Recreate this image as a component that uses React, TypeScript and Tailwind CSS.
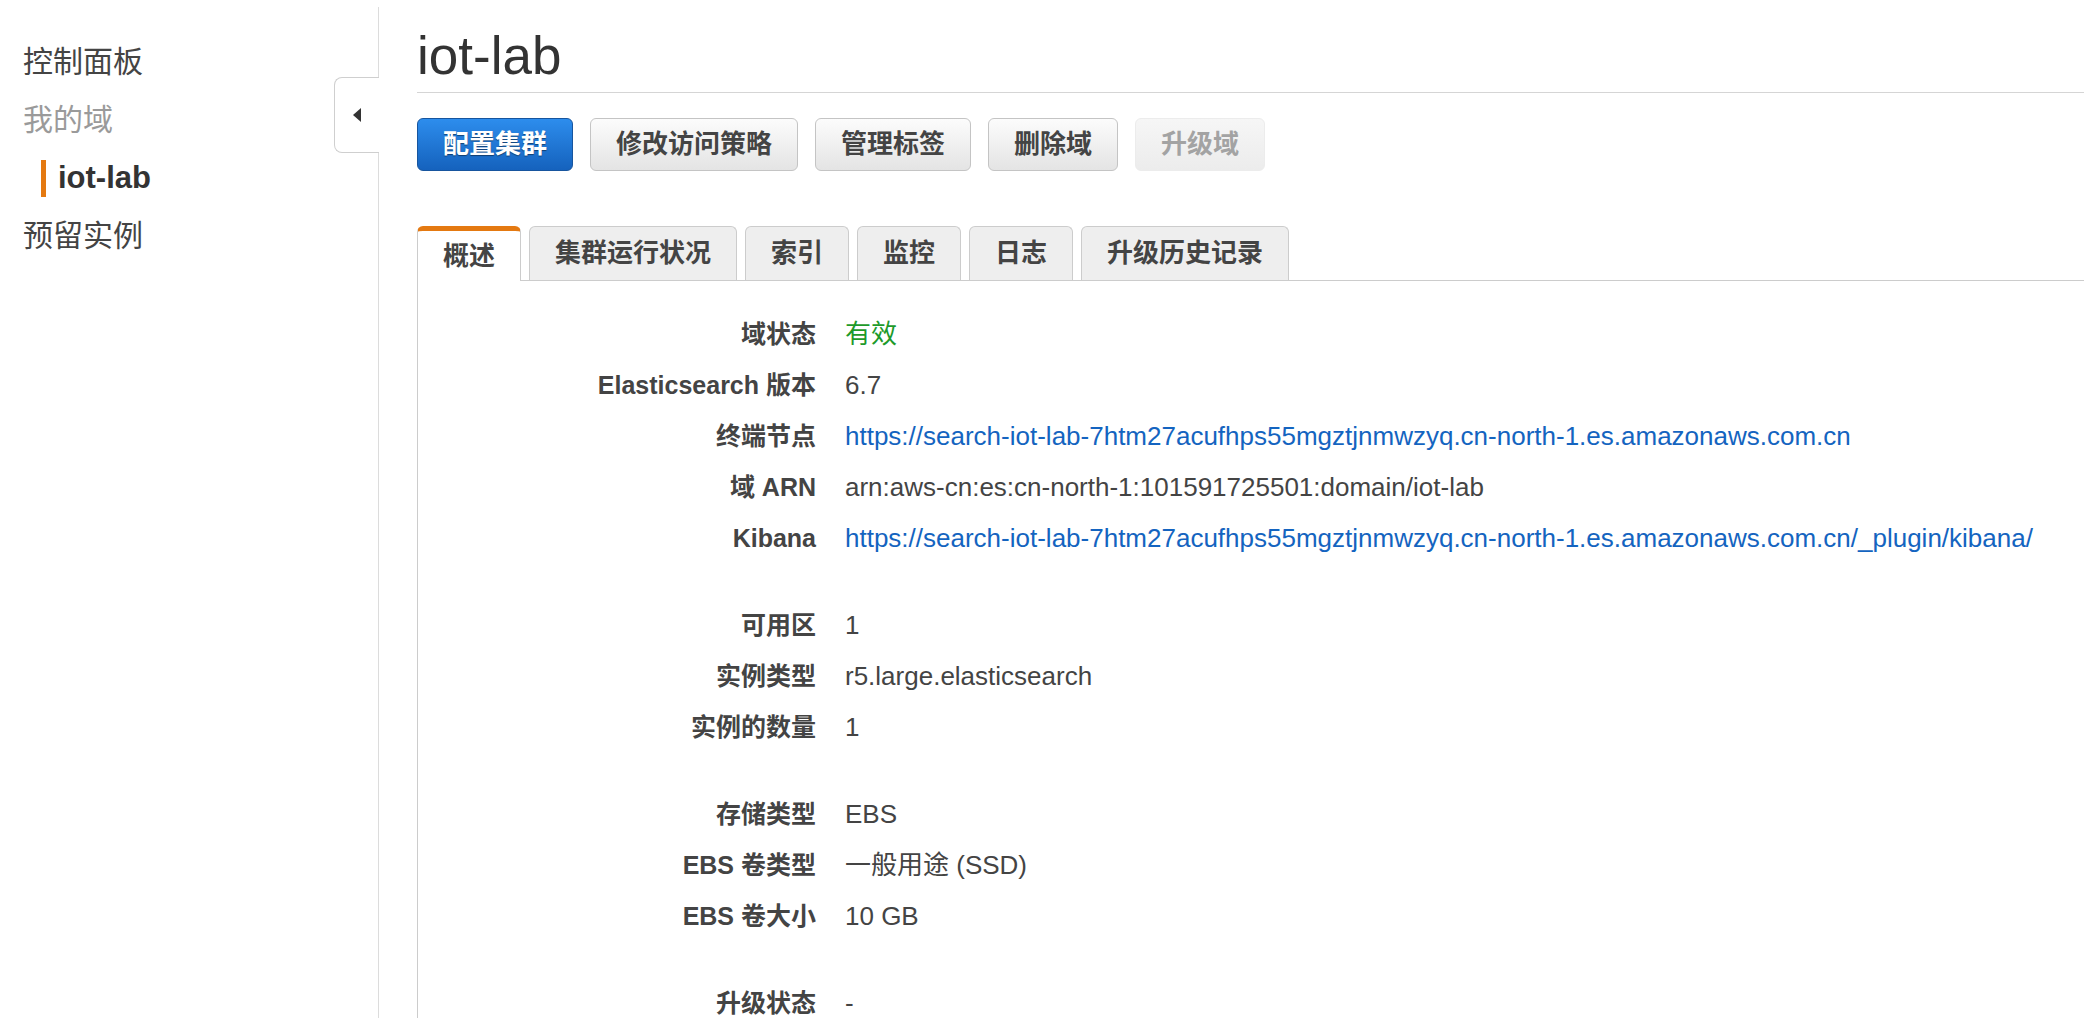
import React from 'react';

const FONT = "font-['Liberation_Sans','Noto_Sans_CJK_SC',sans-serif]";

const actions = [
  { label: '配置集群', kind: 'primary' },
  { label: '修改访问策略', kind: 'default' },
  { label: '管理标签', kind: 'default' },
  { label: '删除域', kind: 'default' },
  { label: '升级域', kind: 'disabled' },
];

const tabs = ['概述', '集群运行状况', '索引', '监控', '日志', '升级历史记录'];

type Row = { label: string; value: string; tone?: 'green' | 'link' };

const groups: Row[][] = [
  [
    { label: '域状态', value: '有效', tone: 'green' },
    { label: 'Elasticsearch 版本', value: '6.7' },
    { label: '终端节点', value: 'https://search-iot-lab-7htm27acufhps55mgztjnmwzyq.cn-north-1.es.amazonaws.com.cn', tone: 'link' },
    { label: '域 ARN', value: 'arn:aws-cn:es:cn-north-1:101591725501:domain/iot-lab' },
    { label: 'Kibana', value: 'https://search-iot-lab-7htm27acufhps55mgztjnmwzyq.cn-north-1.es.amazonaws.com.cn/_plugin/kibana/', tone: 'link' },
  ],
  [
    { label: '可用区', value: '1' },
    { label: '实例类型', value: 'r5.large.elasticsearch' },
    { label: '实例的数量', value: '1' },
  ],
  [
    { label: '存储类型', value: 'EBS' },
    { label: 'EBS 卷类型', value: '一般用途 (SSD)' },
    { label: 'EBS 卷大小', value: '10 GB' },
  ],
  [{ label: '升级状态', value: '-' }],
];

function ActionButton({ label, kind }: { label: string; kind: string }) {
  if (kind === 'primary') {
    return (
      <button
        type="button"
        className="h-[53px] px-[25px] rounded-[6px] border border-[#17559e] bg-gradient-to-b from-[#2d8ded] to-[#1562bd] text-white text-[26px] font-bold [text-shadow:0_1px_1px_rgba(0,0,0,0.45)]"
      >
        {label}
      </button>
    );
  }
  if (kind === 'disabled') {
    return (
      <button
        type="button"
        className="h-[53px] px-[25px] rounded-[6px] border border-[#ececec] bg-gradient-to-b from-[#f6f6f6] to-[#ececec] text-[#a3a3a3] text-[26px] font-bold"
      >
        {label}
      </button>
    );
  }
  return (
    <button
      type="button"
      className="h-[53px] px-[25px] rounded-[6px] border border-[#c4c4c4] bg-gradient-to-b from-[#fcfcfc] to-[#e4e4e4] text-[#444] text-[26px] font-bold"
    >
      {label}
    </button>
  );
}

export default function App() {
  return (
    <div className={`${FONT} flex h-[1018px] w-full overflow-hidden bg-white text-[#444]`}>
      <aside className="relative w-[378px] shrink-0 pt-[33px]">
        <nav className="flex flex-col">
          <a className="pl-[23px] text-[30px] leading-[58px] text-[#444]">控制面板</a>
          <a className="pl-[23px] text-[30px] leading-[58px] text-[#9a9a9a]">我的域</a>
          <div className="flex items-center pl-[41px] h-[58px]">
            <span className="w-[5px] h-[37px] bg-[#e47911]" />
            <span className="pl-[12px] text-[31px] font-bold text-[#333]">iot-lab</span>
          </div>
          <a className="pl-[23px] text-[30px] leading-[58px] text-[#444]">预留实例</a>
        </nav>
        <button
          type="button"
          aria-label="Collapse"
          className="absolute right-[-1px] top-[77px] w-[45px] h-[76px] flex items-center justify-center rounded-l-[8px] border border-r-0 border-[#cfcfcf] bg-white"
        >
          <svg width="10" height="16" viewBox="0 0 10 16">
            <path d="M9 1 L1 8 L9 15 Z" fill="#333" />
          </svg>
        </button>
      </aside>
      <div className="w-px shrink-0 mt-[7px] bg-[#dcdcdc]" />

      <main className="flex-1 pl-[38px] pt-[24px] flex flex-col">
        <h1 className="text-[53px] leading-[64px] text-[#333] font-normal">iot-lab</h1>
        <div className="mt-[4px] border-t border-[#d5d5d5]" />

        <div className="mt-[25px] flex gap-[17px]">
          {actions.map(a => (
            <ActionButton key={a.label} label={a.label} kind={a.kind} />
          ))}
        </div>

        <div className="mt-[55px] flex items-end gap-[8px] border-b border-[#cccccc]">
          {tabs.map((t, i) =>
            i === 0 ? (
              <div
                key={t}
                className="relative -mb-px h-[55px] px-[25px] flex items-center rounded-t-[6px] border border-b-0 border-[#cccccc] border-t-[5px] border-t-[#e47911] bg-white text-[26px] font-bold text-[#444]"
              >
                {t}
              </div>
            ) : (
              <div
                key={t}
                className="h-[54px] px-[25px] flex items-center rounded-t-[6px] border border-b-0 border-[#cccccc] bg-[#eeeeee] text-[26px] font-bold text-[#444]"
              >
                {t}
              </div>
            )
          )}
        </div>

        <div className="flex-1 border-l border-[#cccccc] pt-[28px]">
          {groups.map((g, gi) => (
            <div key={gi} className={gi > 0 ? 'mt-[36px]' : ''}>
              {g.map(r => (
                <div key={r.label} className="flex h-[51px] items-center">
                  <div className="w-[398px] text-right text-[25px] font-bold text-[#444]">{r.label}</div>
                  <div
                    className={
                      'pl-[29px] text-[26px] whitespace-nowrap ' +
                      (r.tone === 'green' ? 'text-[#1d9a2a]' : r.tone === 'link' ? 'text-[#1464c0]' : 'text-[#444]')
                    }
                  >
                    {r.value}
                  </div>
                </div>
              ))}
            </div>
          ))}
        </div>
      </main>
    </div>
  );
}
